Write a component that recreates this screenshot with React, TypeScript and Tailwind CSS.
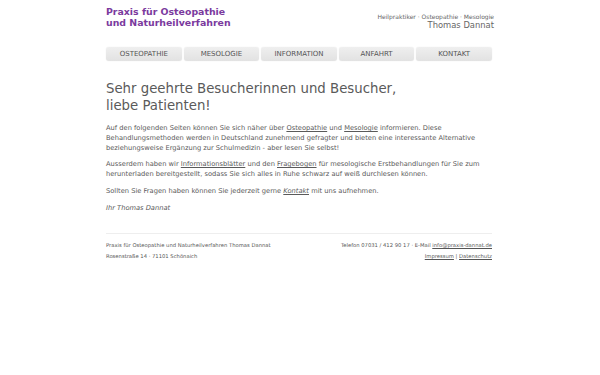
import React from "react";

const navItems = ["OSTEOPATHIE", "MESOLOGIE", "INFORMATION", "ANFAHRT", "KONTAKT"];

export default function App() {
  return (
    <div className="min-h-[375px] w-[600px] bg-white" style={{ fontFamily: '"DejaVu Sans", Verdana, sans-serif' }}>
      <div className="mx-auto w-[388px] pt-[6px]">
        <header className="flex items-start justify-between">
          <div className="text-[9.4px] font-bold leading-[11px] text-[#7b3a9e]">
            <div>Praxis für Osteopathie</div>
            <div>und Naturheilverfahren</div>
          </div>
          <div className="pt-[7px] text-right text-[#666]">
            <div className="text-[6px] leading-[7px]">Heilpraktiker · Osteopathie · Mesologie</div>
            <div className="text-[8.4px] leading-[10px]">Thomas Dannat</div>
          </div>
        </header>
        <nav className="mt-[17px] flex w-[386px] gap-[2px]">
          {navItems.map((n) => (
            <div
              key={n}
              className="flex h-[14px] flex-1 items-center justify-center rounded-[3px] bg-gradient-to-b from-[#efefef] to-[#e2e2e2] text-[7px] text-[#555] shadow-[0_0_1px_rgba(0,0,0,0.15)]"
            >
              {n}
            </div>
          ))}
        </nav>
        <main className="text-[#5a5a5a]">
          <h1 className="mt-[19px] text-[13.3px] leading-[17px]">
            Sehr geehrte Besucherinnen und Besucher,
            <br />
            liebe Patienten!
          </h1>
          <div className="mt-[9px] text-[6.7px] leading-[10px]">
            <p>
              Auf den folgenden Seiten können Sie sich näher über <span className="underline">Osteopathie</span> und{" "}
              <span className="underline">Mesologie</span> informieren. Diese Behandlungsmethoden werden in Deutschland
              zunehmend gefragter und bieten eine interessante Alternative beziehungsweise Ergänzung zur Schulmedizin -
              aber lesen Sie selbst!
            </p>
            <p className="mt-[6px]">
              Ausserdem haben wir <span className="underline">Informationsblätter</span> und den{" "}
              <span className="underline">Fragebogen</span> für mesologische Erstbehandlungen für Sie zum herunterladen
              bereitgestellt, sodass Sie sich alles in Ruhe schwarz auf weiß durchlesen können.
            </p>
            <p className="mt-[7px]">
              Sollten Sie Fragen haben können Sie jederzeit gerne <span className="italic underline">Kontakt</span> mit uns
              aufnehmen.
            </p>
            <p className="mt-[7px] italic">Ihr Thomas Dannat</p>
          </div>
        </main>
        <footer className="mt-[20px] w-[386px] border-t border-[#eee] pt-[6px] text-[5.25px] leading-[11px] text-[#555]">
          <div className="flex justify-between">
            <div>
              <div>Praxis für Osteopathie und Naturheilverfahren Thomas Dannat</div>
              <div>Rosenstraße 14 · 71101 Schönaich</div>
            </div>
            <div className="text-right">
              <div>
                Telefon 07031 / 412 90 17 · E-Mail <span className="underline">info@praxis-dannat.de</span>
              </div>
              <div>
                <span className="underline">Impressum</span> | <span className="underline">Datenschutz</span>
              </div>
            </div>
          </div>
        </footer>
      </div>
    </div>
  );
}
